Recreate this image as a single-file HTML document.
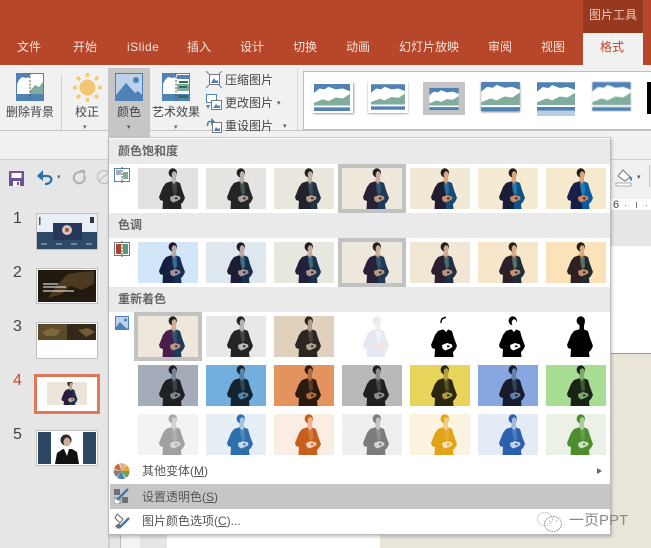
<!DOCTYPE html>
<html lang="zh"><head><meta charset="utf-8"><title>PPT</title>
<style>
html,body{margin:0;padding:0}
body{width:651px;height:548px;position:relative;overflow:hidden;background:#E6E6E6;font-family:"Liberation Sans","Noto Sans CJK SC",sans-serif;font-size:12px;color:#444}
.a,.l,.t,.tab,svg.a{position:absolute}
.l{white-space:nowrap;line-height:16px}
.tab{top:39px;color:#F7E4DE;line-height:16px;white-space:nowrap}
.t{width:60px;height:41px;background:var(--b)}
.t svg{display:block;width:60px;height:41px;filter:blur(.35px)}
.h{position:absolute;left:1px;width:501px;height:25px;background:#EAEAEA;color:#666;font-weight:bold;line-height:25px;text-indent:9px;font-size:12px}
.sel{position:absolute;border:4px solid #C2C2C2;width:60px;height:41px}
.n{font-size:16px;line-height:18px;color:#444;left:13px}
</style></head><body>
<svg width="0" height="0" style="position:absolute">
<defs>
<symbol id="p" viewBox="0 0 60 41">
<path fill="var(--jl)" d="M34 13 L28 15 L25 19 L21 29 L22 32 L25 33 L24.500 41 L36 41 L36 18Z"/>
<path fill="var(--jr,var(--jl))" d="M37 13 L42 15 L44 22 L47 30 L45 34 L43 36 L43.500 41 L36 41 L36 18Z"/>
<path fill="var(--s)" d="M33.500 8 L38 8 L38 14 L33.500 14Z"/>
<path fill="var(--v,var(--jl))" d="M34 15 L38.500 14.500 L39 25 L36 27 L34.500 21Z"/>
<path fill="var(--w)" d="M34.500 14 L37.500 13.500 L37 15.500 L35 15.500Z"/>
<path fill="var(--w)" d="M32 29 L37 27 L42 28.500 L42.500 31 L39 33 L35 34.500 L32.500 32.500Z"/>
<path fill="var(--jl)" d="M37 29.500 L39.500 29.500 L39.500 31.200 L37 31.200Z"/>
<ellipse cx="34.800" cy="4.800" rx="4.200" ry="4.500" fill="var(--h,var(--jl))"/>
<ellipse cx="36.200" cy="6.800" rx="2.500" ry="3.500" fill="var(--s)"/>
</symbol>
<symbol id="m" viewBox="0 0 40 30">
<rect width="40" height="30" fill="#5182B4"/>
<path fill="#fff" d="M0 10 L6 5 L12 6 L16 3 L24 6 L32 5 L40 8 L40 26 L0 26Z"/>
<path fill="#80AD9D" d="M0 21 L10 17 L16 19 L24 15 L32 16 L40 11 L40 24 L0 24Z"/>
<rect y="24" width="40" height="1.500" fill="#fff"/>
</symbol>
</defs>
</svg>

<!-- title / tabs -->
<div class="a" style="left:0;top:0;width:651px;height:65px;background:#B7472A"></div>
<div class="a" style="left:583px;top:0;width:60px;height:33px;background:#96391F"></div>
<div class="a" style="left:583px;top:33px;width:60px;height:33px;background:#F1F1F1"></div>
<div class="l" style="left:589px;top:7px;color:#F2C9BC">图片工具</div>
<div class="tab" style="left:17px">文件</div>
<div class="tab" style="left:73px">开始</div>
<div class="tab" style="left:127px;letter-spacing:.5px">iSlide</div>
<div class="tab" style="left:187px">插入</div>
<div class="tab" style="left:240px">设计</div>
<div class="tab" style="left:293px">切换</div>
<div class="tab" style="left:346px">动画</div>
<div class="tab" style="left:399px">幻灯片放映</div>
<div class="tab" style="left:488px">审阅</div>
<div class="tab" style="left:541px">视图</div>
<div class="tab" style="left:600px;color:#B7472A">格式</div>

<!-- ribbon -->
<div class="a" style="left:0;top:65px;width:651px;height:95px;background:#F1F1F1"></div>
<div class="a" style="left:0;top:130px;width:651px;height:1px;background:#C6C6C6"></div>
<div class="a" style="left:0;top:159px;width:651px;height:1px;background:#D2D2D2"></div>
<div class="a" style="left:61px;top:75px;width:1px;height:55px;background:#D0D0D0"></div>
<div class="a" style="left:297px;top:68px;width:1px;height:62px;background:#D8D8D8"></div>
<div class="a" style="left:108px;top:68px;width:42px;height:70px;background:#C6C6C6"></div>

<!-- remove background icon -->
<svg class="a" style="left:16px;top:73px" width="28" height="28" viewBox="0 0 28 28">
<rect x=".5" y=".5" width="27" height="27" fill="#fff" stroke="#4F81B0"/>
<path fill="#5182B4" d="M1 1H14V4L10 5L6 4L3 7L1 11Z"/>
<path fill="#80AD9D" d="M14 18L19 12L23 14L27 9V21H14Z"/>
<rect x="1" y="21" width="26" height="6" fill="#5182B4"/>
<path d="M14 0V28" stroke="#555" stroke-dasharray="2 1.500" fill="none"/>
</svg>
<div class="l" style="left:6px;top:104px">删除背景</div>
<!-- sun -->
<svg class="a" style="left:73px;top:73px" width="29" height="29" viewBox="0 0 29 29">
<circle cx="14.500" cy="14.500" r="8" fill="#EFC673"/>
<g stroke="#F0C97F" stroke-width="3.400">
<path d="M14.500 0V4M14.500 25V29M0 14.500H4M25 14.500H29M4 4L7 7M22 22L25 25M4 25L7 22M22 7L25 4"/>
</g></svg>
<div class="l" style="left:75px;top:104px">校正</div>
<div class="l" style="left:83px;top:120px;font-size:7px;color:#666">▾</div>
<!-- colour -->
<svg class="a" style="left:115px;top:73px" width="28" height="28" viewBox="0 0 28 28">
<rect x=".5" y=".5" width="27" height="27" fill="#BCD1EA" stroke="#4F81B5"/>
<circle cx="21" cy="7" r="3" fill="#4F81B5"/>
<path fill="#4F81B5" d="M1 27V22L11 10L20 20L23 18L27 22V27Z"/>
</svg>
<div class="l" style="left:117px;top:104px">颜色</div>
<div class="l" style="left:127px;top:120px;font-size:7px;color:#555">▾</div>
<!-- art -->
<svg class="a" style="left:162px;top:73px" width="28" height="28" viewBox="0 0 28 28">
<rect x=".5" y=".5" width="27" height="27" fill="#fff" stroke="#5182B4"/>
<path fill="#5182B4" d="M1 1H14V4L10 5L6 4L3 7L1 11Z"/>
<path fill="#80AD9D" d="M15 11H27V18H15Z"/>
<path fill="#5182B4" d="M15 2H27V6H15Z"/>
<rect x="1" y="21" width="26" height="6" fill="#5182B4"/>
<path fill="#2F6E5A" d="M17 8H26V10H17ZM17 13H25V15H17ZM16 22H26V25H16Z"/>
<path d="M14 0V28" stroke="#555" stroke-dasharray="2 1.500" fill="none"/>
</svg>
<div class="l" style="left:152px;top:104px">艺术效果</div>
<div class="l" style="left:174px;top:120px;font-size:7px;color:#666">▾</div>
<!-- small commands -->
<svg class="a" style="left:206px;top:71px" width="16" height="17" viewBox="0 0 16 17">
<rect x="3.500" y="3.500" width="10" height="10" fill="#fff" stroke="#777"/>
<path fill="#5182B4" d="M5 12L8 7L10 10L12 9V12Z"/>
<path stroke="#5182B4" d="M0 0L3 3M16 0L13 3M0 17L3 14M16 17L13 14"/>
</svg>
<div class="l" style="left:225px;top:72px">压缩图片</div>
<svg class="a" style="left:206px;top:94px" width="16" height="17" viewBox="0 0 16 17">
<rect x="0.500" y="0.500" width="10" height="8" fill="#fff" stroke="#5182B4"/>
<rect x="5.500" y="6.500" width="10" height="9" fill="#fff" stroke="#777"/>
<path fill="#5182B4" d="M7 14L10 10L12 12L14 11V14Z"/>
<path fill="#5182B4" d="M0 11H4L2 15Z"/>
</svg>
<div class="l" style="left:225px;top:95px">更改图片</div>
<div class="l" style="left:277px;top:96px;font-size:7px;color:#555">▾</div>
<svg class="a" style="left:206px;top:118px" width="16" height="16" viewBox="0 0 16 16">
<rect x="6.500" y="4.500" width="9" height="10" fill="#fff" stroke="#777"/>
<path fill="#5182B4" d="M8 13L10 9L12 11L14 10V13Z"/>
<path fill="none" stroke="#4F81B5" stroke-width="1.600" d="M6 3.500H3.500C2 3.500 1.500 5 1.500 8"/>
<path fill="#4F81B5" d="M5 0V7L9 3.500Z"/>
</svg>
<div class="l" style="left:225px;top:118px">重设图片</div>
<div class="l" style="left:283px;top:119px;font-size:7px;color:#555">▾</div>

<!-- gallery -->
<div class="a" style="left:303px;top:71px;width:348px;height:59px;background:#fff;border:1px solid #BDBDBD;border-right:0;box-sizing:border-box"></div>
<svg class="a" style="left:312px;top:82px;filter:drop-shadow(1px 1px 1px #999)" width="41" height="31"><rect width="41" height="31" fill="#fff"/><use href="#m" x="0" y="2" width="40" height="27"/></svg>
<svg class="a" style="left:368px;top:81px;filter:drop-shadow(0 1px 1px #aaa)" width="40" height="32"><rect width="40" height="32" fill="#fff"/><use href="#m" x="3" y="3" width="34" height="26"/></svg>
<svg class="a" style="left:423px;top:82px" width="42" height="33"><rect width="42" height="33" fill="#C4C4C4"/><use href="#m" x="5" y="6" width="32" height="22"/></svg>
<svg class="a" style="left:481px;top:82px;filter:drop-shadow(0 1px 1px #777)" width="39" height="29"><use href="#m" width="39" height="29"/></svg>
<svg class="a" style="left:537px;top:82px" width="38" height="34"><use href="#m" width="38" height="29"/><rect y="29" width="38" height="5" fill="#B9CDE3"/></svg>
<svg class="a" style="left:592px;top:82px;filter:blur(.6px)" width="39" height="30"><use href="#m" width="39" height="29"/></svg>
<div class="a" style="left:647px;top:82px;width:4px;height:32px;background:#000"></div>

<!-- left panel -->
<div class="a" style="left:0;top:160px;width:108px;height:388px;background:#E6E6E6"></div>
<svg class="a" style="left:9px;top:171px" width="15" height="15" viewBox="0 0 15 15">
<path fill="#70509B" d="M0 0H15V15H0Z"/><rect x="2.500" y="2" width="10" height="5" fill="#fff"/><rect x="4" y="10" width="7" height="5" fill="#fff"/><rect x="8" y="11" width="2" height="3" fill="#70509B"/>
</svg>
<svg class="a" style="left:37px;top:170px" width="17" height="15" viewBox="0 0 17 15">
<path fill="none" stroke="#2F6EAB" stroke-width="2.200" d="M3 6H10C14 6 15 9 14 11C13 13 11 14 8 14"/>
<path fill="#2F6EAB" d="M6 0L0 6L6 11Z"/>
</svg>
<div class="l" style="left:57px;top:170px;font-size:7px;color:#666">▾</div>
<svg class="a" style="left:72px;top:170px" width="15" height="15" viewBox="0 0 15 15">
<path fill="none" stroke="#B0B0B0" stroke-width="2" d="M9 2.500A5.500 5.500 0 1 0 12 5"/><path fill="#B0B0B0" d="M7 0H13V5Z"/>
</svg>
<svg class="a" style="left:96px;top:170px" width="13" height="16" viewBox="0 0 13 16">
<circle cx="8" cy="7" r="6.500" fill="none" stroke="#BBB"/><path stroke="#BBB" d="M3 11L12 3" fill="none"/>
</svg>
<div class="a" style="left:108px;top:160px;width:2px;height:388px;background:#CFCFCF"></div>

<div class="l n" style="top:210px">1</div>
<div class="l n" style="top:264px">2</div>
<div class="l n" style="top:318px">3</div>
<div class="l n" style="top:372px;color:#C0492C">4</div>
<div class="l n" style="top:426px">5</div>

<svg class="a" style="left:36px;top:213px" width="62" height="37" viewBox="0 0 62 37">
<rect x=".5" y=".5" width="61" height="36" fill="#E9F0F7" stroke="#BFBFBF"/>
<rect x="1" y="19" width="60" height="17" fill="#2E4A66"/>
<rect x="17" y="10" width="29" height="17" fill="#26365C"/>
<circle cx="31" cy="17" r="5" fill="#D7C4BA"/><circle cx="31" cy="17" r="2" fill="#B34B3A"/>
<rect x="54" y="4" width="4" height="6" fill="#333"/><rect x="3" y="4" width="1.500" height="8" fill="#555"/>
<path stroke="#AFC0D0" stroke-dasharray="6 9" d="M5 31H58"/>
</svg>
<svg class="a" style="left:36px;top:268px" width="62" height="36" viewBox="0 0 62 36">
<rect x=".5" y=".5" width="61" height="35" fill="#fff" stroke="#BFBFBF"/>
<rect x="2" y="2" width="58" height="32" fill="#221A0E"/>
<path fill="#5A4628" d="M22 16L32 6L44 4L58 3V16L46 22L34 18L26 26L12 30Z" opacity=".75"/>
<path stroke="#fff" d="M7 16H22M7 19H30M7 23H38" fill="none"/>
</svg>
<svg class="a" style="left:36px;top:322px" width="62" height="37" viewBox="0 0 62 37">
<rect x=".5" y=".5" width="61" height="36" fill="#fff" stroke="#BFBFBF"/>
<rect x="2" y="2" width="58" height="16" fill="#33281A"/>
<rect x="2" y="2" width="29" height="16" fill="#5C4A2B"/>
<path fill="#8B7549" d="M6 10L15 6L25 8L20 14L10 14Z" opacity=".7"/>
<path fill="#6F5C38" d="M42 8L52 6L59 10L50 15Z"/>
</svg>
<div class="a" style="left:34px;top:374px;width:66px;height:40px;box-sizing:border-box;border:3.500px solid #DF775A;background:#fff"></div>
<svg class="a" style="left:47px;top:382px" width="40" height="23" viewBox="0 0 60 34" preserveAspectRatio="none">
<rect width="60" height="34" fill="#EAE5D8"/>
<svg x="0" y="-2" width="60" height="38" viewBox="0 0 60 41" style="--jl:#2C1B3C;--jr:#1C3350;--s:#C8A088;--w:#CBB7A8;--h:#222">
<use href="#p" width="60" height="41"/></svg></svg>
<svg class="a" style="left:36px;top:430px" width="62" height="36" viewBox="0 0 62 36">
<rect x=".5" y=".5" width="61" height="35" fill="#fff" stroke="#BFBFBF"/>
<rect x="2" y="2" width="13" height="32" fill="#2D4763"/><rect x="47" y="2" width="13" height="32" fill="#2D4763"/>
<path fill="#111" d="M19 34L21 23L27 19H36L41 22L43 34Z"/>
<circle cx="30" cy="10" r="5.500" fill="#2A2A2A"/><ellipse cx="31" cy="12" rx="3.500" ry="4.500" fill="#D0AD9B"/>
<path fill="#fff" d="M28 19H33L31 26Z"/>
</svg>

<!-- right side -->
<div class="a" style="left:611px;top:160px;width:40px;height:39px;background:#F1F1F1"></div>
<svg class="a" style="left:615px;top:169px" width="22" height="18" viewBox="0 0 22 18">
<path fill="#fff" stroke="#777" d="M8 1L15 8L10 12L3 7Z"/>
<path fill="#4F81B5" d="M15 7C18 8 17 12 16 12C15 11 14 9 15 7Z"/>
<rect x="1" y="14" width="15" height="3" fill="#fff" stroke="#999" stroke-width=".8"/>
</svg>
<div class="l" style="left:637px;top:170px;font-size:7px;color:#555">▾</div>
<div class="a" style="left:649px;top:165px;width:1px;height:22px;background:#C6C6C6"></div>
<div class="a" style="left:611px;top:199px;width:40px;height:11px;background:#fff"></div>
<div class="l" style="left:613px;top:199px;font-size:11px;line-height:12px;color:#444">6</div>
<div class="a" style="left:625px;top:205px;width:1px;height:1px;background:#777"></div>
<div class="a" style="left:636px;top:202px;width:1px;height:6px;background:#777"></div>
<div class="a" style="left:646px;top:205px;width:1px;height:1px;background:#777"></div>
<div class="a" style="left:611px;top:210px;width:40px;height:36px;background:#E6E6E6"></div>
<div class="a" style="left:611px;top:246px;width:40px;height:107px;background:#fff"></div>
<div class="a" style="left:611px;top:353px;width:40px;height:1px;background:#999"></div>
<div class="a" style="left:611px;top:354px;width:40px;height:194px;background:#E9E5D9"></div>
<div class="a" style="left:120px;top:535px;width:1px;height:13px;background:#BDBDBD"></div>
<div class="a" style="left:121px;top:535px;width:19px;height:13px;background:#F4F4F4"></div>
<div class="a" style="left:167px;top:535px;width:213px;height:13px;background:#fff"></div>
<div class="a" style="left:380px;top:535px;width:271px;height:13px;background:#E9E5D9"></div>

<!-- dropdown -->
<div class="a" style="left:108px;top:137px;width:503px;height:398px;background:#fff;border:1px solid #BBB;border-top-color:#C6C6C6;box-sizing:border-box;box-shadow:1px 2px 3px rgba(0,0,0,.22)"></div>
<div class="h" style="left:109px;top:139px;height:25px">颜色饱和度</div>
<div class="h" style="left:109px;top:213px">色调</div>
<div class="h" style="left:109px;top:287px">重新着色</div>

<svg class="a" style="left:114px;top:167px" width="16" height="16" viewBox="0 0 16 16"><rect x=".5" y="1.500" width="15" height="13" fill="#fff" stroke="#5182B4"/><path fill="#AAB" d="M2 3H7V8H2Z"/><path fill="#80AD9D" d="M9 5H14V12H9Z"/><path stroke="#555" stroke-dasharray="2 1" d="M8 0V16"/></svg>
<svg class="a" style="left:114px;top:241px" width="16" height="16" viewBox="0 0 16 16"><rect x=".5" y="1.500" width="15" height="13" fill="#fff" stroke="#777"/><path fill="#A8452C" d="M2 3H7V13H2Z"/><path fill="#5A9A7B" d="M9 3H14V13H9Z"/><path stroke="#555" stroke-dasharray="2 1" d="M8 0V16"/></svg>
<svg class="a" style="left:115px;top:316px" width="14" height="14" viewBox="0 0 14 14"><rect x=".5" y=".5" width="13" height="13" fill="#BCD1EA" stroke="#4F81B5"/><circle cx="10.500" cy="4" r="1.500" fill="#4F81B5"/><path fill="#4F81B5" d="M1 13V11L5 6L10 11L13 13Z"/></svg>

<!-- row1 -->
<div class="t" style="left:138px;top:168px;--b:#E2E2E1;--jl:#232323;--s:#B8B4B1;--v:#444;--w:#A8A8A8;--h:#222"><svg><use href="#p"/></svg></div>
<div class="t" style="left:206px;top:168px;--b:#E5E4E0;--jl:#242424;--jr:#25292E;--s:#BFB0A6;--v:#455;--w:#ADA097;--h:#222"><svg><use href="#p"/></svg></div>
<div class="t" style="left:274px;top:168px;--b:#E9E6DE;--jl:#22222C;--jr:#22303F;--s:#C6B0A0;--v:#3A4E60;--w:#B39C8B;--h:#222"><svg><use href="#p"/></svg></div>
<div class="sel" style="left:338px;top:164px"></div>
<div class="t" style="left:342px;top:168px;--b:#EDE8DB;--jl:#272037;--jr:#1E3A58;--s:#CFAF98;--v:#305870;--w:#BC9880;--h:#222"><svg><use href="#p"/></svg></div>
<div class="t" style="left:410px;top:168px;--b:#F1E9D5;--jl:#201D33;--jr:#164A78;--s:#D5A98A;--v:#2F6E96;--w:#C49070;--h:#1E1E1E"><svg><use href="#p"/></svg></div>
<div class="t" style="left:478px;top:168px;--b:#F4EBD2;--jl:#1B1E38;--jr:#10538A;--s:#D9A583;--v:#2878A8;--w:#C88C64;--h:#1E1E1E"><svg><use href="#p"/></svg></div>
<div class="t" style="left:546px;top:168px;--b:#F5EACE;--jl:#17204A;--jr:#0B5AA0;--s:#DCA27C;--v:#1E80B8;--w:#CC8858;--h:#1E1E1E"><svg><use href="#p"/></svg></div>
<!-- row2 -->
<div class="t" style="left:138px;top:242px;--b:#D3E5F9;--jl:#151F3E;--jr:#142F56;--s:#B8A8B0;--v:#3A6C92;--w:#A8909A;--h:#1A1A24"><svg><use href="#p"/></svg></div>
<div class="t" style="left:206px;top:242px;--b:#DEE6EE;--jl:#1C1C36;--jr:#172F4C;--s:#C0A8A6;--v:#3F6C84;--w:#AE9490;--h:#1C1C22"><svg><use href="#p"/></svg></div>
<div class="t" style="left:274px;top:242px;--b:#E7E7E0;--jl:#22203A;--jr:#1A334C;--s:#C8AB9E;--v:#3D6A78;--w:#B4988A;--h:#1E1E20"><svg><use href="#p"/></svg></div>
<div class="sel" style="left:338px;top:238px"></div>
<div class="t" style="left:342px;top:242px;--b:#EDE8DB;--jl:#272037;--jr:#1E3A58;--s:#CFAF98;--v:#305870;--w:#BC9880;--h:#222"><svg><use href="#p"/></svg></div>
<div class="t" style="left:410px;top:242px;--b:#F2E6D5;--jl:#2A2030;--jr:#1E3044;--s:#D2AC92;--v:#4A6A70;--w:#BE9578;--h:#222"><svg><use href="#p"/></svg></div>
<div class="t" style="left:478px;top:242px;--b:#F8E6CB;--jl:#2C2028;--jr:#202C3A;--s:#D6AC8A;--v:#56706A;--w:#C29474;--h:#221F1E"><svg><use href="#p"/></svg></div>
<div class="t" style="left:546px;top:242px;--b:#FCE2B8;--jl:#2E2022;--jr:#222A30;--s:#DAAB80;--v:#5E7060;--w:#C69068;--h:#241E1A"><svg><use href="#p"/></svg></div>
<!-- row3 -->
<div class="sel" style="left:134px;top:312px"></div>
<div class="t" style="left:138px;top:316px;--b:#EDE8DB;--jl:#4A1E4A;--jr:#1E3A58;--s:#CFAF98;--v:#305870;--w:#BC9880;--h:#222"><svg><use href="#p"/></svg></div>
<div class="t" style="left:206px;top:316px;--b:#E8E8E8;--jl:#242424;--s:#B4B4B4;--v:#444;--w:#B8B8B8;--h:#222"><svg><use href="#p"/></svg></div>
<div class="t" style="left:274px;top:316px;--b:#DFD1BD;--jl:#2A2622;--s:#A99C8C;--v:#4A4238;--w:#AFA18F;--h:#2A2622"><svg><use href="#p"/></svg></div>
<div class="t" style="left:342px;top:316px;--b:#fff;--jl:#E6E7F2;--jr:#E4EAF2;--s:#F5EDE8;--v:#F0F2F5;--w:#F4E6DE;--h:#ECECEC"><svg><use href="#p"/></svg></div>
<div class="t" style="left:410px;top:316px;--b:#fff;--jl:#000;--s:#fff;--v:#000;--w:#fff;--h:#fff"><svg><use href="#p"/><path d="M31 7C31 3 33 1.500 36 1.500" stroke="#000" stroke-width="1.400" fill="none"/></svg></div>
<div class="t" style="left:478px;top:316px;--b:#fff;--jl:#000;--s:#fff;--v:#000;--w:#fff;--h:#000"><svg><use href="#p"/></svg></div>
<div class="t" style="left:546px;top:316px;--b:#fff;--jl:#000;--s:#000;--v:#000;--w:#000;--h:#000"><svg><use href="#p"/></svg></div>
<!-- row4 -->
<div class="t" style="left:138px;top:365px;--b:#A4ACBA;--jl:#1E2024;--s:#7C8290;--v:#3E4148;--w:#7E8490;--h:#1E2024"><svg><use href="#p"/></svg></div>
<div class="t" style="left:206px;top:365px;--b:#74AEDE;--jl:#14232F;--s:#5484A8;--v:#2C465A;--w:#5482A6;--h:#14232F"><svg><use href="#p"/></svg></div>
<div class="t" style="left:274px;top:365px;--b:#E4935E;--jl:#2A1A10;--s:#AE6F46;--v:#5A3A26;--w:#AE6F46;--h:#2A1A10"><svg><use href="#p"/></svg></div>
<div class="t" style="left:342px;top:365px;--b:#B9B9B9;--jl:#202020;--s:#8C8C8C;--v:#444;--w:#8C8C8C;--h:#202020"><svg><use href="#p"/></svg></div>
<div class="t" style="left:410px;top:365px;--b:#E9D45B;--jl:#2A2610;--s:#AE9E44;--v:#5A5224;--w:#AE9E44;--h:#2A2610"><svg><use href="#p"/></svg></div>
<div class="t" style="left:478px;top:365px;--b:#88A7E0;--jl:#161C2C;--s:#667EAA;--v:#323F58;--w:#667EAA;--h:#161C2C"><svg><use href="#p"/></svg></div>
<div class="t" style="left:546px;top:365px;--b:#A7DE93;--jl:#1A2416;--s:#7EA86E;--v:#3E5636;--w:#7EA86E;--h:#1A2416"><svg><use href="#p"/></svg></div>
<!-- row5 -->
<div class="t" style="left:138px;top:414px;--b:#F3F3F3;--jl:#A0A0A0;--s:#D2D2D2;--v:#B0B0B0;--w:#D8D8D8;--h:#A8A8A8"><svg><use href="#p"/></svg></div>
<div class="t" style="left:206px;top:414px;--b:#E8EEF6;--jl:#2E70AE;--s:#A7C4DF;--v:#4F88BC;--w:#C6D8EA;--h:#2E70AE"><svg><use href="#p"/></svg></div>
<div class="t" style="left:274px;top:414px;--b:#FAEDE4;--jl:#C8601C;--s:#EDB48E;--v:#D67A40;--w:#F2CFB8;--h:#C8601C"><svg><use href="#p"/></svg></div>
<div class="t" style="left:342px;top:414px;--b:#EFEFEF;--jl:#7C7C7C;--s:#C4C4C4;--v:#909090;--w:#D4D4D4;--h:#7C7C7C"><svg><use href="#p"/></svg></div>
<div class="t" style="left:410px;top:414px;--b:#FBF3E0;--jl:#E0A416;--s:#F0CE7C;--v:#E4AF38;--w:#F5E2B4;--h:#E0A416"><svg><use href="#p"/></svg></div>
<div class="t" style="left:478px;top:414px;--b:#E5EBF6;--jl:#2C5FAE;--s:#A2BBDE;--v:#4C7ABE;--w:#C4D4EA;--h:#2C5FAE"><svg><use href="#p"/></svg></div>
<div class="t" style="left:546px;top:414px;--b:#EBF1E6;--jl:#4C8E2E;--s:#ADCB9C;--v:#659E4A;--w:#CFE0C4;--h:#4C8E2E"><svg><use href="#p"/></svg></div>

<!-- menu items -->
<svg class="a" style="left:113px;top:463px" width="17" height="16" viewBox="0 0 17 16">
<path fill="#D2683A" d="M8.500 8L1 6A8 8 0 0 1 6 .5Z"/><path fill="#D9B08A" d="M8.500 8L7 .3A8 8 0 0 1 13 1.500Z"/><path fill="#E4A53C" d="M8.500 8L13.500 2A8 8 0 0 1 16.500 8Z"/><path fill="#6FA056" d="M8.500 8H16.500A8 8 0 0 1 13 15Z"/><path fill="#4F81B5" d="M8.500 8L12 15.500A8 8 0 0 1 4 14.500Z"/><path fill="#7F7F7F" d="M8.500 8L3.500 14A8 8 0 0 1 .7 7Z"/>
</svg>
<div class="l" style="left:142px;top:463px;color:#555">其他变体(<u>M</u>)</div>
<div class="a" style="left:597px;top:468px;width:0;height:0;border-left:5px solid #666;border-top:3.500px solid transparent;border-bottom:3.500px solid transparent"></div>
<div class="a" style="left:110px;top:484px;width:500px;height:25px;background:#C6C6C6"></div>
<svg class="a" style="left:114px;top:488px" width="16" height="16" viewBox="0 0 16 16">
<rect width="6" height="6" x="0" y="1" fill="#707070"/><rect width="6" height="6" x="8" y="9" fill="#707070"/><rect width="6" height="6" x="0" y="10" fill="#fff" stroke="#777"/>
<path stroke="#3E78B5" stroke-width="2.400" d="M3 12L14 1" fill="none"/>
</svg>
<div class="l" style="left:142px;top:489px;color:#555">设置透明色(<u>S</u>)</div>
<svg class="a" style="left:114px;top:513px" width="17" height="17" viewBox="0 0 17 17">
<path fill="#fff" stroke="#666" d="M3 1L9 6L6 10L1 5Z"/>
<path stroke="#3E78B5" stroke-width="2.400" d="M5 15L15 5" fill="none"/>
<path fill="#707070" d="M1 13L5 10L7 13L4 16Z"/>
</svg>
<div class="l" style="left:142px;top:513px;color:#555">图片颜色选项(<u>C</u>)...</div>

<!-- watermark -->
<svg class="a" style="left:536px;top:509px" width="27" height="26" viewBox="0 0 27 26" fill="none" stroke="#888" stroke-dasharray="1.500 1">
<ellipse cx="9" cy="10" rx="7.500" ry="6.500" stroke="#bbb"/>
<ellipse cx="17" cy="15" rx="8.500" ry="7.500"/>
<path d="M13 12h1M20 12h1"/>
</svg>
<div class="l" style="left:569px;top:512px;color:#888;font-size:15px;line-height:18px;white-space:nowrap">一页PPT</div>
</body></html>
